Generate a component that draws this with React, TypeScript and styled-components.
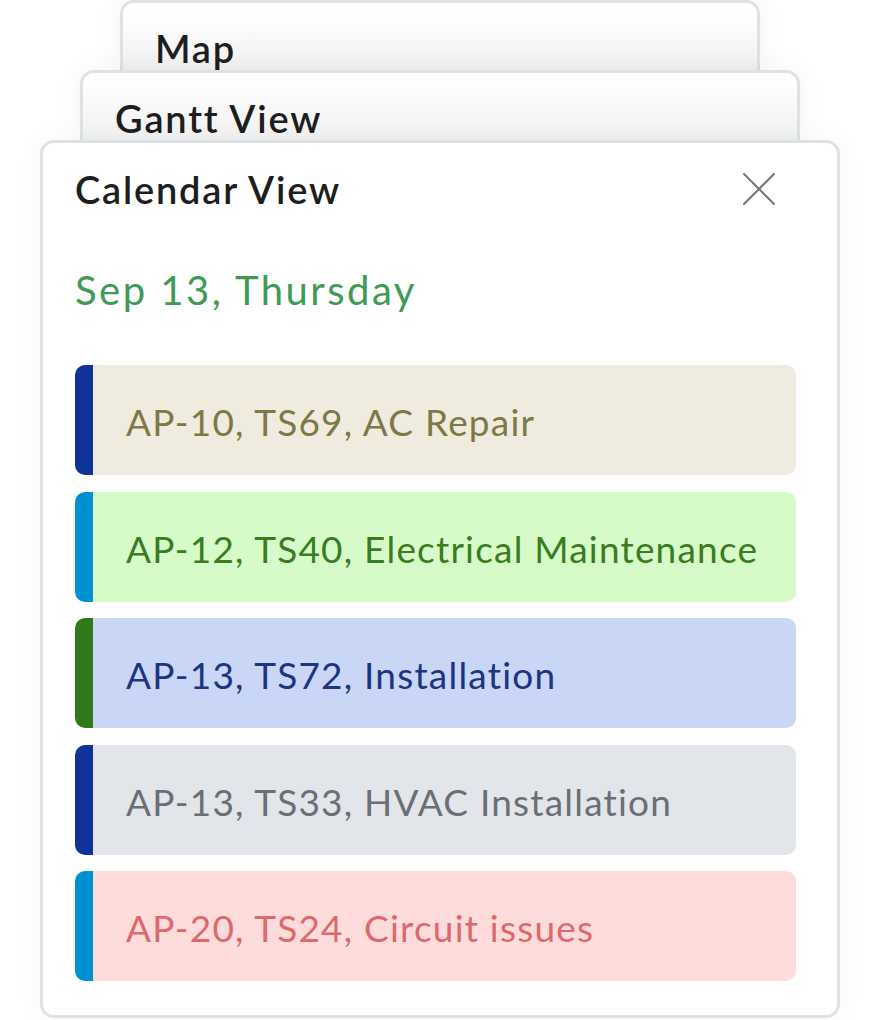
import React from "react";
import styled, { createGlobalStyle } from "styled-components";

type Job = {
  label: string;
  bar: string;
  bg: string;
  text: string;
};

const jobs: Job[] = [
  { label: "AP-10, TS69, AC Repair", bar: "#10339a", bg: "#efecdf", text: "#7e7847" },
  { label: "AP-12, TS40, Electrical Maintenance", bar: "#0091d1", bg: "#d6fbc8", text: "#3a7c22" },
  { label: "AP-13, TS72, Installation", bar: "#2e7a1b", bg: "#c9d6f5", text: "#1d3580" },
  { label: "AP-13, TS33, HVAC Installation", bar: "#10339a", bg: "#e2e6ea", text: "#6b6f74" },
  { label: "AP-20, TS24, Circuit issues", bar: "#0091d1", bg: "#ffdcdc", text: "#dc6a6a" },
];

export default function App() {
  return (
    <>
      <GlobalStyle />
      <Stack>
        <BackTab $width={640}>
          <TabTitle>Map</TabTitle>
        </BackTab>
        <BackTab $width={720}>
          <TabTitle>Gantt View</TabTitle>
        </BackTab>
        <Card>
          <CardHeader>
            <TabTitle>Calendar View</TabTitle>
            <CloseButton aria-label="close">
              <svg width="34" height="34" viewBox="0 0 34 34">
                <path
                  d="M2 2 L32 32 M32 2 L2 32"
                  stroke="#72777c"
                  strokeWidth="2"
                  strokeLinecap="round"
                />
              </svg>
            </CloseButton>
          </CardHeader>
          <DateLabel>Sep 13, Thursday</DateLabel>
          <JobList>
            {jobs.map((job) => (
              <JobRow key={job.label} $bg={job.bg} $bar={job.bar}>
                <JobText $color={job.text}>{job.label}</JobText>
              </JobRow>
            ))}
          </JobList>
        </Card>
      </Stack>
    </>
  );
}

const GlobalStyle = createGlobalStyle`
  body {
    margin: 0;
    background: #ffffff;
    font-family: Lato, "Noto Sans", sans-serif;
  }
`;

const Stack = styled.div`
  display: flex;
  flex-direction: column;
  align-items: center;
  width: 880px;
  padding-bottom: 2px;
`;

const BackTab = styled.div<{ $width: number }>`
  box-sizing: border-box;
  width: ${({ $width }) => $width}px;
  height: 70px;
  padding: 26px 32px 0;
  border: 3px solid #dce3e7;
  border-bottom: none;
  border-radius: 14px 14px 0 0;
  background: linear-gradient(#ffffff 15%, #f0f0f0 100%);
  box-shadow: 0 0 28px rgba(0, 0, 0, 0.05);
  overflow: hidden;
`;

const TabTitle = styled.div`
  font-size: 38px;
  font-weight: 600;
  line-height: 38px;
  letter-spacing: 1.8px;
  color: #1e1e1e;
  white-space: nowrap;
`;

const Card = styled.div`
  box-sizing: border-box;
  width: 800px;
  padding: 27px 41px 34px 32px;
  border: 3px solid #dce3e7;
  border-radius: 14px;
  background: #ffffff;
  box-shadow: 0 0 28px rgba(0, 0, 0, 0.04);
`;

const CardHeader = styled.div`
  display: flex;
  justify-content: space-between;
  align-items: center;
  height: 38px;
`;

const CloseButton = styled.div`
  display: flex;
  margin-right: 20px;
`;

const DateLabel = styled.div`
  margin-top: 62px;
  font-size: 40px;
  line-height: 40px;
  letter-spacing: 2.5px;
  color: #3f9a55;
`;

const JobList = styled.div`
  display: flex;
  flex-direction: column;
  gap: 16.5px;
  margin-top: 55px;
`;

const JobRow = styled.div<{ $bg: string; $bar: string }>`
  display: flex;
  align-items: center;
  box-sizing: border-box;
  height: 110px;
  padding: 3px 0 0 33px;
  border-left: 18px solid ${({ $bar }) => $bar};
  border-radius: 10px;
  background: ${({ $bg }) => $bg};
`;

const JobText = styled.div<{ $color: string }>`
  font-size: 37px;
  line-height: 37px;
  letter-spacing: 1.2px;
  color: ${({ $color }) => $color};
`;
